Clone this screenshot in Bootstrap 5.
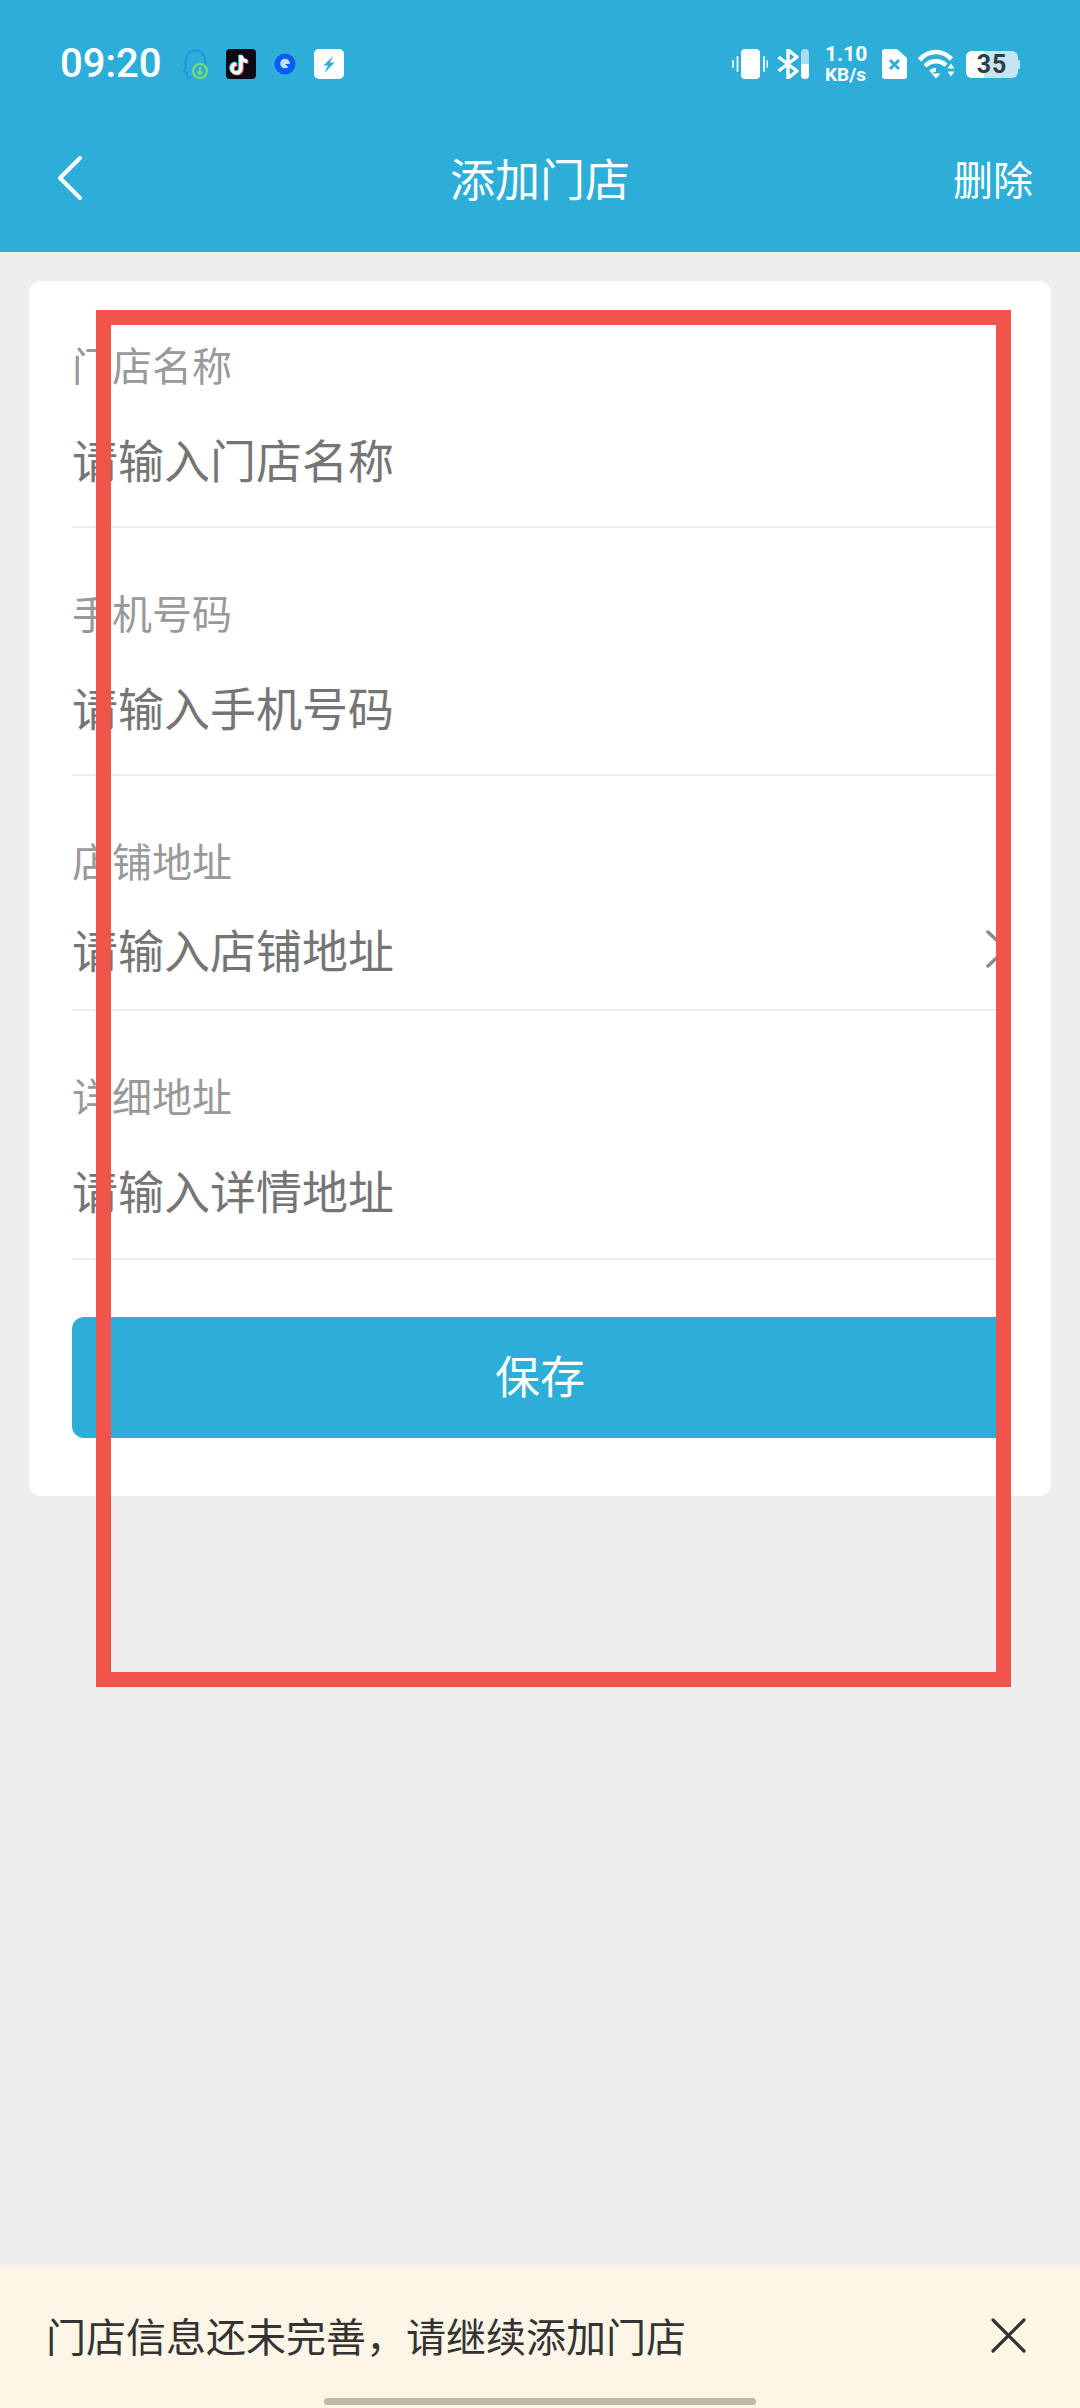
<!DOCTYPE html>
<html lang="zh-CN">
<head>
  <meta charset="UTF-8" />
  <meta name="viewport" content="width=device-width, initial-scale=1" />
  <title>添加门店</title>
  <link href="https://cdn.jsdelivr.net/npm/bootstrap@5.3.3/dist/css/bootstrap.min.css" rel="stylesheet" />
  <style>
    html, body { height: 2408px; }
    body { background: #eeeeee; font-family: "Noto Sans CJK SC", "Noto Sans", sans-serif; font-weight: 400; overflow: hidden; }
    .app-head { background: #2daed8; height: 252px; color: #fff; }
    .status-bar { height: 128px; padding: 0 60px 0 60px; }
    .status-time { font-family: Roboto, sans-serif; font-weight: 500; font-size: 40px; line-height: 1; width: 104px; }
    .status-left { gap: 18px; }
    .status-right { gap: 11px; }
    .vib-icon { margin-right: -2px; }
    .speed { font-family: Roboto, sans-serif; font-weight: 700; line-height: 1; width: 43px; margin: 0 3px 0 5px; }
    .speed-num { font-size: 21px; }
    .speed-unit { font-size: 19px; }
    .title-row { height: 100px; padding: 0 47px; }
    .title-side { flex: 1 1 0; }
    .back-icon { margin-left: 10px; }
    .title-main { font-size: 45px; line-height: 60px; }
    .title-action { font-size: 40px; line-height: 60px; }
    .form-panel { background: #fff; margin: 29px 29px 0; padding: 0 43px 58px; border-radius: 12px; }
    .field { border-bottom: 2px solid #eeeeee; padding-top: 62px; padding-bottom: 38px; }
    .field-first { padding-top: 61px; }
    .field-pick { padding-bottom: 31px; }
    .field-last { padding-bottom: 39px; }
    .field-pick .field-value { margin-top: 36px; }
    .field-label { font-size: 40px; line-height: 44px; color: #999; }
    .field-value { font-size: 46px; line-height: 60px; color: #757575; margin-top: 42px; }
    .pick-arrow { margin-top: 38px; }
    .btn-save { background: #2daed8; border: 0; color: #fff; height: 121px; margin-top: 57px; padding-bottom: 12px; font-size: 45px; border-radius: 12px; }
    .btn-save:hover { background: #2daed8; color: #fff; }
    .notice { height: 143px; background: #fdf5e6; padding: 0 54px 3px 46px; color: #333; font-size: 40px; }
    .home-bar { bottom: 3px; left: 324px; width: 432px; height: 7px; background: #c0b8ab; border-radius: 4px; }
    .mark-frame { left: 96px; top: 310px; width: 915px; height: 1377px; border: 15px solid #f2544c; }
  </style>
</head>
<body class="d-flex flex-column position-relative">
  <header class="app-head">
    <div class="status-bar d-flex align-items-center justify-content-between">
      <div class="status-left d-flex align-items-center">
        <span class="status-time">09:20</span>
        <!-- face with download badge -->
        <svg width="26" height="30" viewBox="0 0 26 30" fill="none">
          <path d="M10 28.500H7c-1.300 0-2-1-2-2v-3c-2 0-3.500-.8-3-2l2.300-3.500c-.5-1-.8-3-.8-5 0-6 4-11.500 10-11.500s10 5 10 11v4" stroke="#1b8fe3" stroke-width="1.600"/>
          <circle cx="18" cy="22" r="7" fill="#2daed8" stroke="#7ddc6a" stroke-width="2"/>
          <path d="M18 18v7M15.500 22.500l2.500 2.700 2.500-2.700" stroke="#7ddc6a" stroke-width="1.800"/>
        </svg>
        <!-- tiktok -->
        <svg width="30" height="30" viewBox="0 0 30 30" fill="none">
          <rect width="30" height="30" rx="4" fill="#0a0a14"/>
          <g stroke-width="3.600" fill="none">
            <path d="M15 6.500v13a4.500 4.500 0 1 1-4.500-4.500M15 6.500c.5 3.300 2.800 5.500 6.500 6" stroke="#25f4ee" transform="translate(-1 -.8)"/>
            <path d="M15 6.500v13a4.500 4.500 0 1 1-4.500-4.500M15 6.500c.5 3.300 2.800 5.500 6.500 6" stroke="#fe2c55" transform="translate(1 .8)"/>
            <path d="M15 6.500v13a4.500 4.500 0 1 1-4.500-4.500M15 6.500c.5 3.300 2.800 5.500 6.500 6" stroke="#fff"/>
          </g>
        </svg>
        <!-- blue ring -->
        <svg width="22" height="22" viewBox="0 0 22 22">
          <circle cx="11" cy="11" r="10.500" fill="#0a5cf5"/>
          <circle cx="11" cy="10.500" r="4.800" fill="#bfe3f3"/>
          <path d="M11 11h5.500l-1 4z" fill="#0a5cf5"/>
        </svg>
        <!-- bolt -->
        <svg width="30" height="30" viewBox="0 0 30 30">
          <rect width="30" height="30" rx="5" fill="#fff"/>
          <path d="M19.500 6.500 9.500 16.500h4.500l-3.500 7.500 10-10.500h-4.700z" fill="#2daed8"/>
        </svg>
      </div>
      <div class="status-right d-flex align-items-center">
        <!-- vibrate -->
        <svg class="vib-icon" width="36" height="30" viewBox="0 0 36 30">
          <rect x="9" y="0" width="19" height="30" rx="4" fill="#fff"/>
          <rect x="0" y="11" width="2" height="8" rx="1" fill="#fff" opacity=".85"/>
          <rect x="4.500" y="7" width="2" height="16" rx="1" fill="#fff" opacity=".85"/>
          <rect x="31" y="7" width="2" height="16" rx="1" fill="#fff" opacity=".85"/>
          <rect x="34.500" y="11" width="1.500" height="8" rx=".7" fill="#fff" opacity=".85"/>
        </svg>
        <!-- bluetooth + level -->
        <svg width="32" height="30" viewBox="0 0 32 30" fill="none">
          <path d="M1.500 8 20 22l-9 7V1l9 7L1.500 22" stroke="#fff" stroke-width="3.400" stroke-linejoin="round"/>
          <rect x="24" y="0" width="8" height="30" rx="4" fill="#a9dcee"/>
          <path d="M24 15h8v11a4 4 0 0 1-8 0z" fill="#fff"/>
        </svg>
        <div class="speed d-flex flex-column">
          <span class="speed-num">1.10</span>
          <span class="speed-unit">KB/s</span>
        </div>
        <!-- sim -->
        <svg width="25" height="30" viewBox="0 0 25 30">
          <path d="M3 0h12l10 9v18a3 3 0 0 1-3 3H3a3 3 0 0 1-3-3V3a3 3 0 0 1 3-3z" fill="#fff"/>
          <path d="M8 11l9 9M17 11l-9 9" stroke="#2daed8" stroke-width="3"/>
        </svg>
        <!-- wifi -->
        <svg width="37" height="30" viewBox="0 0 37 30" fill="none">
          <path d="M1.500 11C6 5.500 12 3 18 3s10.500 2 15.500 7" stroke="#fff" stroke-width="4.600"/>
          <path d="M7 17c3-3 7-4.800 11-4.800s7.500 1.500 10 4" stroke="#fff" stroke-width="4.400"/>
          <path d="M12.500 23c1.500-1.500 3.500-2.300 5.500-2.300" stroke="#fff" stroke-width="4"/>
          <path d="M13.500 24.500h9l-4.500 5z" fill="#fff"/>
          <path d="M29.500 19.500l3.500-5 3.500 5zM29.500 22.500h7l-3.500 5z" fill="#fff"/>
        </svg>
        <!-- battery -->
        <svg width="54" height="27" viewBox="0 0 54 27">
          <rect x="0" y="0" width="52" height="27" rx="6" fill="#c5e5f2"/>
          <path d="M6 0h12v27H6a6 6 0 0 1-6-6V6a6 6 0 0 1 6-6z" fill="#fff"/>
          <rect x="52" y="9" width="2" height="9" rx="1" fill="#c5e5f2"/>
          <text x="26" y="22" text-anchor="middle" font-family="Roboto, sans-serif" font-weight="700" font-size="25" letter-spacing="1" fill="#2f3b44">35</text>
        </svg>
      </div>
    </div>
    <div class="title-row d-flex align-items-center">
      <div class="title-side d-flex">
        <svg class="back-icon" width="26" height="46" viewBox="0 0 26 46" fill="none">
          <path d="M23 3 3 23l20 20" stroke="#fff" stroke-width="4" stroke-linecap="round" stroke-linejoin="round"/>
        </svg>
      </div>
      <div class="title-main">添加门店</div>
      <div class="title-side title-action text-end">删除</div>
    </div>
  </header>

  <main class="flex-grow-1">
    <form class="form-panel" onsubmit="return false">
      <div class="field field-first">
        <div class="field-label">门店名称</div>
        <div class="field-value">请输入门店名称</div>
      </div>
      <div class="field">
        <div class="field-label">手机号码</div>
        <div class="field-value">请输入手机号码</div>
      </div>
      <div class="field field-pick">
        <div class="field-label">店铺地址</div>
        <div class="d-flex align-items-center justify-content-between">
          <div class="field-value">请输入店铺地址</div>
          <svg class="pick-arrow" width="22" height="38" viewBox="0 0 22 38" fill="none">
            <path d="M2 2l18 17L2 36" stroke="#8a8a8a" stroke-width="3.500" stroke-linecap="round" stroke-linejoin="round"/>
          </svg>
        </div>
      </div>
      <div class="field field-last">
        <div class="field-label">详细地址</div>
        <div class="field-value">请输入详情地址</div>
      </div>
      <button type="button" class="btn btn-save w-100 d-block">保存</button>
    </form>
  </main>

  <footer class="notice d-flex align-items-center justify-content-between position-relative">
    <span>门店信息还未完善，请继续添加门店</span>
    <svg width="35" height="35" viewBox="0 0 35 35" fill="none">
      <path d="M2 2l31 31M33 2 2 33" stroke="#333" stroke-width="3.200" stroke-linecap="round"/>
    </svg>
    <div class="home-bar position-absolute"></div>
  </footer>

  <!-- red annotation rectangle drawn over the page -->
  <div class="mark-frame position-absolute"></div>

  <script src="https://cdn.jsdelivr.net/npm/bootstrap@5.3.3/dist/js/bootstrap.bundle.min.js"></script>
</body>
</html>
